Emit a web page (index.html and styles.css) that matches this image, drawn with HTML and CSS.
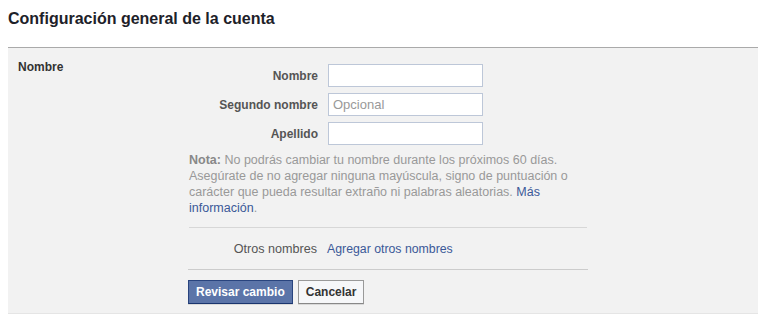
FILE: index.html
```html
<!DOCTYPE html>
<html lang="es">

<head>
    <meta charset="UTF-8">
    <meta name="viewport" content="width=device-width, initial-scale=1.0">
    <title>Configuración general de la cuenta</title>
    <link rel="stylesheet" href="styles.css">
</head>

<body>
    <h2 class="page-title">Configuración general de la cuenta</h2>

    <div class="settings-panel">
        <div class="section-label">Nombre</div>

        <div class="section-body">
            <div class="name-fields">
                <label class="field-label" for="firstName">Nombre</label>
                <input class="text-input" id="firstName" type="text">

                <label class="field-label" for="middleName">Segundo nombre</label>
                <input class="text-input" id="middleName" type="text" placeholder="Opcional">

                <label class="field-label" for="lastName">Apellido</label>
                <input class="text-input" id="lastName" type="text">
            </div>

            <p class="note">
                <b>Nota:</b> No podrás cambiar tu nombre durante los próximos 60 días.
                Asegúrate de no agregar ninguna mayúscula, signo de puntuación o
                carácter que pueda resultar extraño ni palabras aleatorias. <a href="#">Más
                información</a>.
            </p>

            <div class="other-names">
                <span class="other-label">Otros nombres</span>
                <a href="#">Agregar otros nombres</a>
            </div>

            <div class="actions">
                <button class="btn btn-primary" type="button">Revisar cambio</button>
                <button class="btn" type="button">Cancelar</button>
            </div>
        </div>
    </div>
</body>

</html>
```

FILE: styles.css
```css
body {
    margin: 0;
    padding: 0 0 0 8px;
    font-family: "Liberation Sans", Arial, sans-serif;
    font-size: 13px;
    color: #333;
    background: #fff;
}

a {
    color: #3b5998;
    text-decoration: none;
}

.page-title {
    margin: 0;
    padding: 9px 0 0;
    height: 38px;
    font-size: 16px;
    line-height: 19px;
    font-weight: bold;
    color: #1d2129;
}

.settings-panel {
    display: flex;
    border-top: 1px solid #aaa;
    border-bottom: 1px solid #e5e5e5;
    background: #f2f2f2;
    padding: 16px 0 9px;
}

.section-label {
    width: 170px;
    padding-left: 10px;
    font-size: 12px;
    font-weight: bold;
    color: #333;
    line-height: 15px;
    margin-top: -4px;
    flex-shrink: 0;
}

.section-body {
    width: 400px;
}

.name-fields {
    display: grid;
    grid-template-columns: 120px 155px;
    column-gap: 10px;
    row-gap: 6px;
    align-items: center;
    margin-left: 10px;
}

.field-label {
    text-align: right;
    font-size: 12px;
    font-weight: bold;
    color: #555;
}

.text-input {
    box-sizing: border-box;
    width: 155px;
    height: 23px;
    margin: 0;
    padding: 0 4px;
    border: 1px solid #bdc7d8;
    background: #fff;
    font-family: inherit;
    font-size: 13px;
    color: #333;
    outline: none;
}

.text-input::placeholder {
    color: #999;
}

.note {
    margin: 7px 0 0 1px;
    padding-bottom: 11px;
    border-bottom: 1px solid #d7d7d7;
    font-size: 12.5px;
    line-height: 16px;
    color: #999;
    width: 398px;
}

.note b {
    color: #888;
}

.other-names {
    display: flex;
    gap: 10px;
    align-items: center;
    height: 41px;
    border-bottom: 1px solid #ccc;
    font-size: 12.6px;
}

.other-names a {
    font-size: 12.3px;
}

.other-label {
    width: 129px;
    text-align: right;
    color: #555;
}

.actions {
    display: flex;
    gap: 5px;
    padding-top: 10px;
}

.btn {
    box-sizing: border-box;
    height: 24px;
    margin: 0;
    padding: 0 7px;
    border: 1px solid #999;
    border-bottom-color: #888;
    background: #f6f7f9;
    font-family: inherit;
    font-size: 12px;
    font-weight: bold;
    color: #333;
    box-shadow: 0 1px 0 rgba(0, 0, 0, .1);
}

.btn-primary {
    background: #5b74a8;
    border-color: #29447e #29447e #1a356e;
    color: #fff;
}
```
